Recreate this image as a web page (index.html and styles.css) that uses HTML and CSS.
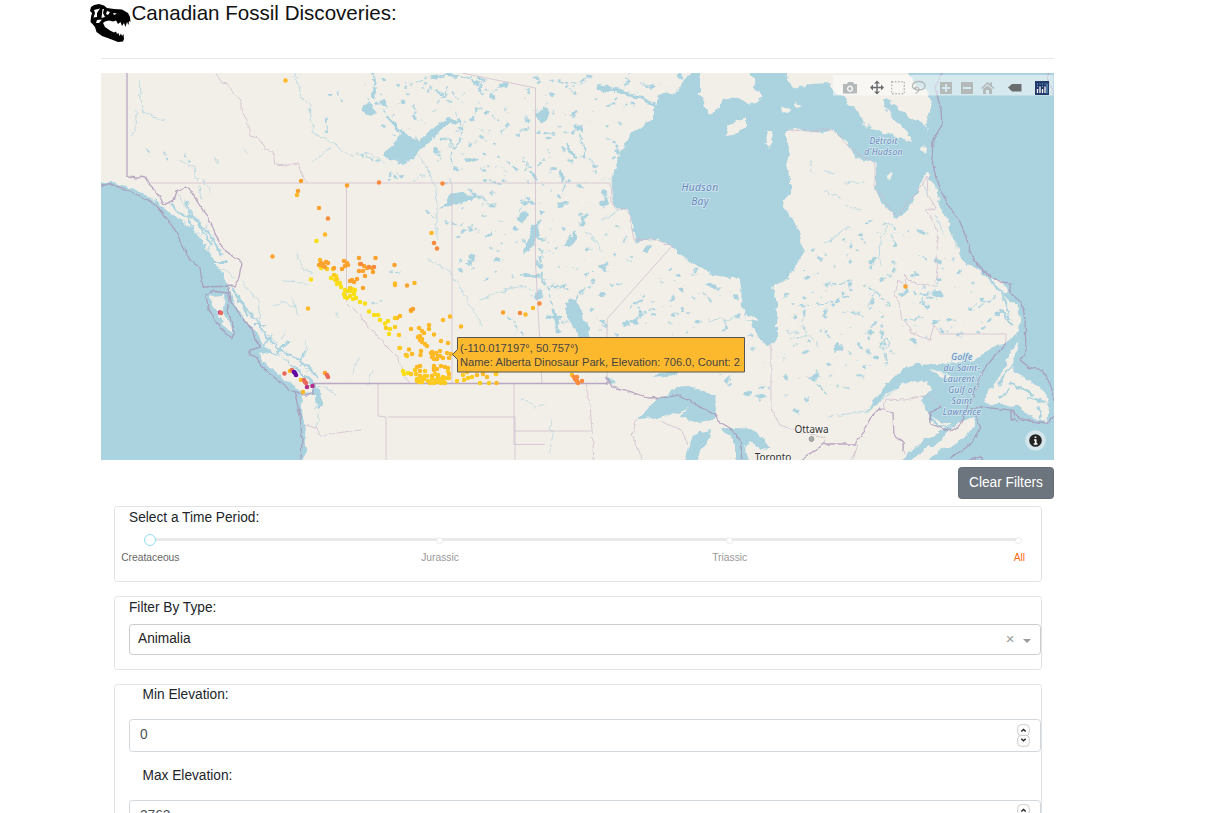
FILE: index.html
```html
<!DOCTYPE html>
<html lang="en">
<head>
<meta charset="utf-8">
<title>Canadian Fossil Discoveries</title>
<link rel="stylesheet" href="styles.css">
</head>
<body>
<main class="page">
<header class="header">
<svg class="logo" viewBox="86 0 50 46" aria-hidden="true">
<path d="M91 7L94 5L99 4L104 5.500L107 8L114 9L122 9.500L128 13L130 17L130.500 22L129 21L128.500 25L127 22L125.500 27L124 23L122 26L120.500 22L118 24L116 20.500L113 21.500L109 20.500L105 21.500L103 23L105 27L110 30.500L114 32.500L116 31.500L117 34L118.500 33L119.500 36L121 33.500L122 36L123.500 34L124 39L123 41.500L118 42L109 38.500L102 36L96.500 32L95 27L92.500 24L90.500 22L91 17L92 13L90 11Z"/>
<path class="logo-gap" d="M94 10L100 8.500L97 13L97 17L93.500 17.500L95 13ZM102.500 9L104 9L103 13L105 17L101.500 18ZM107 11L110 12L108 15L106 14ZM113 13L117 13.500L114 15ZM97 20L102 19.500L99 23L96 23Z"/>
</svg>
<h1 class="title">Canadian Fossil Discoveries:</h1>
</header>
<hr class="rule">
<section class="map">
<svg class="map-art" viewBox="101 73 953 387">
<defs>
<filter id="rough" color-interpolation-filters="sRGB" filterUnits="userSpaceOnUse" x="95" y="65" width="970" height="405"><feTurbulence type="fractalNoise" baseFrequency=".13" numOctaves="3" seed="4"/><feDisplacementMap in="SourceGraphic" scale="7" xChannelSelector="R" yChannelSelector="G"/></filter>
<filter id="wobble" color-interpolation-filters="sRGB" filterUnits="userSpaceOnUse" x="95" y="65" width="970" height="405"><feTurbulence type="fractalNoise" baseFrequency=".15" numOctaves="2" seed="9"/><feDisplacementMap in="SourceGraphic" scale="4" xChannelSelector="R" yChannelSelector="G"/></filter>
<filter id="speckle" color-interpolation-filters="sRGB" filterUnits="userSpaceOnUse" x="101" y="73" width="953" height="387"><feTurbulence type="fractalNoise" baseFrequency=".09 .11" numOctaves="4" seed="21"/><feColorMatrix values="0 0 0 0 .667  0 0 0 0 .827  0 0 0 0 .875  12 0 0 0 -7.9"/><feComposite in2="SourceGraphic" operator="in"/></filter>
</defs>
<rect class="land" x="101" y="73" width="953" height="387"/>
<path filter="url(#speckle)" d="M350 73H690L655 120L615 165L613 205L633 240L660 245L608 310L607 385L560 370L535 300L455 270L455 185L400 180ZM610 320L680 260L735 285L745 320L770 350V410L690 370L610 380ZM790 260L870 220L925 230L1000 300L1000 330L900 350L850 390L790 420L775 350L785 290Z"/>
<g filter="url(#rough)">
<path class="sea" d="M90 182L113 182L125 186L142 192L155 201L170 213L182 222L195 232L203 243L213 260L228 285L235 305L245 320L250 325L258 335L264 347L275 354L290 363L302 371L313 381L320 390L322 405L317 410L315 396L300 395L302 405L303 425L306 440L304 470H90Z"/>
<path class="sea" d="M690 60L690 73L683 80L680 88L674 94L664 92L658 97L654 108L654 119L645 123L635 130L628 138L624 147L620 154L615 170L611 184L612 200L616 209L628 209L632 223L635 238L634 244L642 240L655 239L672 246L682 257L700 267L712 275L725 277L740 279L742 285L741 300L744 316L752 323L757 335L766 346L772 345L777 338V325L778 310L775 295L771 287L785 280L795 270L802 255L801 240L798 227L790 215L782 208L784 200L791 195V182L786 165L790 155L786 145V133L794 128L808 131L822 134L832 129L843 138L850 145L855 157L867 160L876 163L875 175L877 195L886 207L897 218L910 206L918 190L927 173L935 185L940 205L948 222L954 240L963 260L980 271L1000 283L1009 290L1003 297L1018 305L1020 320L1019 332L1008 343L990 348L980 356L965 362L940 363L915 364L903 368L895 377L885 385L875 400L866 412L875 406L885 395L900 386L915 380L928 383L931 390L922 397L920 401L928 410L930 420L935 425L945 428L960 424L940 430L930 438L915 446L903 458L900 470H1070V60Z"/>
<path class="land" d="M259 353L266 352L280 357L292 366L305 378L313 388L313 394L302 392L294 385L282 378L270 368L262 361ZM210 296L225 295L223 309L230 324L234 334L228 330L218 316L212 305ZM700 60V95L708 113L715 112L722 100L740 97L750 105L763 98L755 87L748 60ZM738 120L746 118V125L738 133L727 135L726 127ZM767 131L773 133L770 148L764 145ZM782 107L791 110L790 114L783 112ZM794 101L802 106L797 108ZM788 60L785 80L795 88L812 84L830 83L833 92L845 98L855 108L862 120L872 129L887 133L900 138L912 142L908 132L895 120L885 107L882 98L890 100L897 108L908 116L921 122L930 130L926 120L932 108L929 93L915 85L905 60ZM891 171L893 174L888 179L887 175ZM920 146L928 147L927 153L919 150ZM862 122L870 125L867 128ZM745 314L757 318L758 321L747 319Z"/>
<path class="land" d="M1020 341L1010 350L1005 365L998 380L990 390L983 403L1003 405L1020 406L1025 413L1035 417L1047 422L1049 405L1047 395L1035 385L1020 375L1012 368L1015 355ZM930 369L942 372L955 378L950 380L938 376ZM907 465L920 453L935 444L948 432L965 418L974 418L974 426L968 435L955 445L940 450L925 465ZM932 416L943 423L953 423L947 427L937 424Z"/>
<path class="sea" d="M638 419L650 405L665 395L680 387L690 386L703 391L715 397L718 412L712 420L700 423L688 420L680 415L690 407L675 413L660 418ZM690 440L700 432L712 430L710 440L700 450L696 470H684ZM718 428L735 427L750 428L765 440L770 450L760 449L750 440L745 447L752 470H735L735 440L725 432ZM566 302L577 300L582 315L588 327L590 345L581 342L575 329L566 317ZM383 154L395 145L400 130L407 135L420 140L435 125L450 119L462 122L445 126L430 140L420 151L413 157L405 163L390 160ZM440 209L450 197L458 191L470 195L485 196L465 202L450 205ZM523 255L528 240L532 225L540 220L538 235L530 250ZM536 115L543 106L548 109L549 117L543 124L537 119ZM517 219L524 211L528 214L523 223ZM563 247L571 237L575 231L578 238L569 247ZM597 85L610 88L617 92L607 92L598 90ZM652 377L677 375L680 368L668 370ZM361 109L368 104L376 114L370 116ZM576 123L582 126L583 132L576 128ZM484 236L492 230V234L486 238Z"/>
</g>
<g class="water" filter="url(#rough)">
<path class="w3" d="M615 90L632 95L645 99L654 105M554 310L556 320L559 332M547 317L560 318M606 378L614 382M532 172L536 181M388 117L396 126L402 135M374 87L375 97M567 144L570 151L576 157M560 171L564 182"/>
<path class="w2" d="M550 80L575 84L590 76M455 112L464 133L455 145L449 158L453 167M410 84L430 77L450 75L478 79L483 95M430 86L453 104M438 103L448 88L459 99M472 118L477 108M466 77L488 91M537 132L556 134M577 128L580 139M583 144L586 158M539 164L545 158M507 162L518 171M525 171L528 164M483 181L500 184M569 180L562 193M445 222L477 228M427 211L433 217M460 260L474 269M490 248L500 250M522 201L520 212M540 249L542 275L548 291L552 305M550 285L570 290M577 299L586 286M610 285L622 283M644 313L657 309M630 308L641 300M682 308L690 312M702 294L712 300M760 387L768 389M792 305L827 304L850 294M833 285L852 281M870 288L880 294L890 309M881 324L887 369M914 292L936 300M920 302L933 290M979 306L998 296M976 303L970 310M905 320L925 318M804 304L803 325M835 352L842 345M820 388L828 394M846 388L852 391M868 337L870 342M147 150L151 156M186 154L190 162M165 151L167 160M327 120L326 132M361 155L382 162M394 177L398 180M388 182L392 171M370 106L368 98M372 72L376 88M338 92L341 100M330 94L333 96M390 272L400 273M373 304L382 301M507 317L515 322M516 327L522 336M585 275L592 270"/>
<path class="w1" d="M294 73L302 98L310 107L313 132L335 144L350 156L372 153L387 165M335 144L320 156L311 163M140 80L142 111L165 121M135 110L137 128L133 136M178 160L195 168L201 198M202 178L210 192M245 150L250 156M215 157L217 165M296 253L304 268L312 274M283 281L302 282L307 286M184 221L190 231L205 235M185 200L193 235L195 270M178 192L187 211M208 225L197 240L205 260M215 235L204 258L218 272M188 244L179 234M195 257L220 268L234 278M200 270L190 260M222 280L216 268M270 306L285 302L295 308M292 298L298 315M267 333L278 345M242 282L258 300L261 332M233 290L247 316M280 340L286 330M305 355L306 340M315 410L320 385L335 394M320 412L317 425M336 313L340 318M351 375L359 357M372 370L368 385M520 398L533 406L544 405M551 420L552 440L549 453M428 260L448 269L482 325M419 155L433 180L437 205V240M480 300L520 285L535 290M586 232L603 250M630 205L600 220M845 183L865 181M890 223L880 240L881 265M825 243L849 227M824 192L840 197M811 160L812 172M845 205L860 210M824 171L836 173M924 185L928 195M935 215L943 232M948 220L956 248M828 417L866 411L895 390M765 260L773 278M785 262L780 275M770 249L780 262M735 318L710 320M800 325L820 348M808 335L790 340"/>
<circle class="ring" cx="885" cy="344" r="4.500"/>
</g>
<g class="inlets" filter="url(#rough)"><path d="M170 203L180 215L196 218L210 235L222 255M187 200L190 225L205 250L218 278M175 218L190 246L215 270M183 234L200 242L204 264M200 262L222 280M201 275L224 275M190 210L212 246M205 243L198 262M195 272L210 262L228 262M210 285L214 272M230 285L240 302L256 319L268 338L281 351L300 360L319 378M236 293L248 316M254 325L267 325M264 347L272 334M277 354L288 341M300 365L304 352M939 195L955 235L970 260L1002 292L1010 320M946 213L964 238M963 250L990 270L1017 299M1000 310L1012 325M990 273L1004 284M998 385L1019 355M1010 383L1035 395M1028 397L1046 402M1000 398L1010 389M1038 406L1042 420"/></g>
<g class="border" filter="url(#wobble)">
<path d="M214 73L222 82L228 83L233 93L241 100V110L247 120L250 136L258 138L264 147L273 152L275 165L285 166L298 163L301 173L306 183M347 303L352 308L360 315L366 325L375 333L385 345L395 355L402 366L403 375L410 383M611 183L612 202L616 209L628 209L634 240L655 239L675 248M786 130L810 131L832 129L852 150L875 163V188L897 217L918 190L927 176L928 195L936 208L926 210L935 225L938 240L936 255L938 270L935 286L920 284L908 280L905 275L906 285L898 280L895 295L900 308L902 320L910 327L912 333L930 340L934 325L940 333M586 383L590 405L592 430L594 460M637 419L632 435L643 460M660 421L682 430L688 445M303 425L317 428L320 436L350 431L360 430M771 345V408L780 425L800 432L825 437L824 444M903 442L905 455M884 408L886 399L905 400L929 395L941 406M857 444L852 460"/>
</g>
<path class="border" d="M147 183H611M346.500 183V302M452 183V383M462 73L535.500 88V262L542 383M672 246L607 319V383M940 334H1006V343M378 384V416L386 417V460M388 417H515V460M515 444.500H545M514 384V431H592M514 431V445"/>
<g class="coast"><path d="M127 73V177"/></g>
<g class="coast" filter="url(#wobble)"><path d="M127 177L138 178L141 175L146 176L147 182L155 190L160 197L164 205L173 200L176 191L185 187L190 190L200 206L207 215L219 241L224 250L240 260L242 264L238 280L234 286L203 287L200 268L190 260L182 244L175 230L168 220L155 205L140 196L125 189L113 185H101M206 295L212 291L228 293L229 300L227 310L235 332L232 338L225 333L215 320L208 307ZM229 287L231 301L245 322L252 328L255 340L261 347L250 350L250 355L257 358L262 368L275 378L290 390L305 395L313 394V384M294 391L300 415L302 440L301 460"/>
<path d="M607 384V378L612 387L625 390L640 395L650 398L668 397L678 395L715 415L718 421L730 428L740 440L743 460M802 460L815 450L825 444H855L863 432L870 418L880 408L893 413L894 435L903 442V452M943 73L935 87L941 110L942 125L933 140L932 160L936 178L948 205L960 222L967 240L972 257L982 270L1000 282L1011 283L1010 293L1022 303L1025 320L1026 350L1020 360L1030 368L1043 370L1050 385L1054 400M1054 415L1047 423L1030 421L1018 418L1012 410L980 407L972 410L981 428L970 445L950 458M1006 343L983 370L971 403M941 406L930 413L931 424L950 431L960 425L968 405M1011 410V419L1018 421M970 460L980 457L983 460M1047 73L1053 95"/></g>
<path class="coast" d="M313 383.500H607"/>
<g class="dots">
<path class="gold" d="M285.500 80.500h0M297 195h0M325 234.500h0M308 308.500h0M320 260h0M395 283.500h0M431.500 233h0M450 316.500h0M461 326.500h0M443 320h0M414.500 283h0M411 311h0M397 318h0M400 316h0M411 329h0M429 325h0M429 329h0M419 328h0M422 331h0M434 334.500h0M441 341h0M448 343h0M533 308h0M525.500 314.500h0M395 285h0M399.500 348h0M409 349.500h0M412 354h0M406 355h0M420 336h0M422 339h0M425 344h0M424 333h0M427 346h0M420 340h0M418 337h0M420.500 355h0M421 351h0M431 353h0M433 355h0M436 353h0M438 356h0M434 359h0M440 351h0M440 356h0M447 353h0M449 358h0M432 352h0M443 358h0M451 354h0M434 366h0M437 369h0M441 366h0M445 367h0M448 368h0M420 366h0M420 371h0M417 367h0M420 376h0M434 370h0M449 374h0M477 375h0M483 374h0M487 377h0M496.500 383h0M496 374h0M432 376h0M438 376h0M290 371h0M303 392h0M301 380h0M572 375h0M437 359h0M432 357h0M422 342h0M434 368h0"/>
<path class="lemon" d="M316.500 241h0M311 279.500h0M321 268h0M331 278h0M335 280h0M338 283h0M336 276h0M341 287h0M345 290h0M351 291h0M354 294h0M350 296h0M345 297h0M353 299h0M356 298h0M340 283h0M344 294h0M360 302h0M365 303.500h0M369 311.500h0M374 315h0M378 315h0M380 320h0M388 321h0M385 323.500h0M390 329h0M389 334h0M403 371h0M408 373h0M404 374h0M348 291h0M347 298h0M355 290h0M352 289h0M337 284h0"/>
<path class="yellow" d="M327 269h0M333 269h0M334 275h0M337 279h0M395 327h0M386 328h0M399 335h0M400 348h0M407 356h0M415 370h0M411 374h0M416 374h0M417 379h0M420 379h0M424 379h0M428 381h0M430 383h0M434 383h0M438 382h0M441 383h0M445 383h0M446 378h0M443 377h0M440 379h0M436 380h0M432 379h0M427 376h0M422 382h0M417 381h0M425 376h0M425 371h0M448 371h0M435 374h0M457 381h0M463 375h0M468 378h0M472 377h0M480 383h0M489 383h0M496 374h0M467 372h0M464 380h0M443 380h0M438 375h0M449 378h0M421 377h0M419 382h0M395 318h0M350 288h0"/>
<path class="amber" d="M301 181h0M298 191h0M347 185.500h0M319 208h0M272.500 256.500h0M321 263h0M323 264h0M326 262h0M325 267h0M319 265h0M328 263h0M344 261h0M347 263h0M345 266h0M348 265h0M359 258h0M360 264h0M364 266h0M367 268h0M372 268h0M375.500 258h0M394.500 265h0M363 271h0M365 276h0M352 280h0M350 281h0M354 282h0M357 279h0M363 288h0M373 272h0M359 271h0M342 269h0M334 268h0M323 266h0M407 285.500h0M413 309h0M503 312.500h0M905.500 286.500h0M411 310h0M325 373h0"/>
<path class="orange" d="M379 182.500h0M442.500 183.500h0M328 218.500h0M434 243h0M437 248.500h0M361 264h0M369 267h0M374 267h0M520 313h0M539.500 303.500h0M574 377h0M575 379h0M577 377h0M577 381h0M578 383h0M582 381h0M576 380h0"/>
<path class="coral" d="M284.500 373.500h0M292 370h0M304 380h0M305 382h0M306 383h0M328 377h0M327 375h0"/>
<path class="plum" d="M220 312.500h0M307 387h0M312.500 386h0"/><path class="indigo" d="M294 372h0M295 373h0M296 375h0"/>
<path class="coral" d="M221 313h0"/>
</g>
<g class="sea-label"><text x="700" y="191">Hudson</text><text x="700" y="204.500">Bay</text></g>
<g class="sea-label small"><text x="883.500" y="143.500">Détroit</text><text x="883.500" y="154.500">d'Hudson</text><text x="962" y="359.500">Golfe</text><text x="962" y="370.500">du Saint-</text><text x="962" y="381.500">Laurent /</text><text x="962" y="392.500">Gulf of</text><text x="962" y="403.500">Saint</text><text x="962" y="414.500">Lawrence</text></g>
<g class="city"><text x="811.500" y="432.800">Ottawa</text><text x="773" y="460.800">Toronto</text><circle cx="811.500" cy="439" r="2.300"/></g>
<g class="hover"><path d="M452.500 354.500L457.500 349.500V337.500H744.500V372H457.500V359.500Z"/><text x="460" y="351.500">(-110.017197°, 50.757°)</text><text x="460" y="366" textLength="280">Name: Alberta Dinosaur Park, Elevation: 706.0, Count: 2</text></g>
<rect class="modebar" x="833" y="75" width="220.500" height="20.500"/>
<g class="tools">
<path fill-rule="evenodd" d="M844 84H847L848 82H853L854 84H857V93.500H843V84ZM850 85.500a3.200 3.200 0 1 0 .1 0ZM850 87a1.700 1.700 0 1 1-.1 0Z"/>
<path fill-rule="evenodd" d="M940 82H952V94H940ZM945 84V87H942V89H945V92H947V89H950V87H947V84ZM961 82H973V94H961ZM963 87V89H971V87Z"/>
<path d="M981 88L987.500 82L990 84V82.500H992V86L994.500 88L993.500 89L987.500 84L982 89ZM983 89L987.500 85.500L992 89V94H989V90H986V94H983Z"/>
<rect class="dashed" x="891.700" y="81.700" width="12.600" height="12"/><path class="lasso" d="M918 90C909 89 912 81.500 919 81.500C927 81.500 927 90 919 90C915 90 914 86.500 917 87C920.500 88 919 92 915.500 93.500"/>
</g>
<g class="tools active"><path d="M877 80.500L880 83.500H877.700V86.800H881V84.500L884 87.500L881 90.500V88.200H877.700V91.500H880L877 94.500L874 91.500H876.300V88.200H873V90.500L870 87.500L873 84.500V86.800H876.300V83.500H874ZM1008 87.500L1012 84H1021.500V91.500H1012Z"/></g>
<g class="plotly"><rect x="1035" y="81" width="14" height="14"/><path d="M1037.500 93V89M1040 93V86.500M1042.500 93V89M1045 93V86.500"/><path class="pips" d="M1037.500 84h.1M1037.500 86.500h.1M1040 84h.1M1042.500 84h.1M1042.500 86.500h.1M1045 84h.1M1047 84V93"/></g>
<g class="info"><circle class="halo" cx="1035.500" cy="440.500" r="10.300"/><circle cx="1035.500" cy="440.500" r="6.300"/><path d="M1035.500 436.500v1.500M1034 440h1.700v4M1033.700 444h3.800"/></g>
</svg>
</section>
<div class="actions"><button class="clear">Clear Filters</button></div>
<section class="card period">
<label class="label">Select a Time Period:</label>
<div class="slider"><i class="handle"></i><i class="stop"></i><i class="stop"></i><i class="stop"></i></div>
<div class="marks"><span class="mark current">Creataceous</span><span class="mark">Jurassic</span><span class="mark">Triassic</span><span class="mark all">All</span></div>
</section>
<section class="card type">
<label class="label">Filter By Type:</label>
<div class="select"><span class="value">Animalia</span><span class="clear-x">×</span><i class="caret"></i></div>
</section>
<section class="card elevation">
<label class="label inset">Min Elevation:</label>
<div class="number"><span>0</span><svg class="spin" viewBox="0 0 13 23"><rect x=".7" y=".7" width="11.600" height="10.800" rx="3.500"/><rect x=".7" y="11.500" width="11.600" height="10.800" rx="3.500"/><path d="M4.300 7.500L6.500 5.500L8.700 7.500M4.300 14.700L6.500 16.700L8.700 14.700"/></svg></div>
<label class="label inset">Max Elevation:</label>
<div class="number"><span>3763</span><svg class="spin" viewBox="0 0 13 23"><rect x=".7" y=".7" width="11.600" height="10.800" rx="3.500"/><rect x=".7" y="11.500" width="11.600" height="10.800" rx="3.500"/><path d="M4.300 7.500L6.500 5.500L8.700 7.500M4.300 14.700L6.500 16.700L8.700 14.700"/></svg></div>
</section>
</main>
</body>
</html>
```
FILE: styles.css
```css
* { box-sizing: border-box; }
html, body { height: 100%; overflow: hidden; }
body { margin: 0; background: #fff; color: #212529; font: 13.71px/20.5px "Liberation Sans", Arial, sans-serif; }
.page { width: 953px; height: 813px; margin-left: 101px; overflow: hidden; padding-left: 15px; margin-left: 86px; width: 968px; }
.header { display: flex; height: 58px; margin-left: -15px; }
.logo { width: 50px; height: 46px; flex: none; }
.logo-gap { fill: #fff; }
.title { margin: 0 0 0 -4.5px; font-size: 20.57px; line-height: 26px; font-weight: 400; color: #111; }
.rule { height: 1px; border: 0; margin: 0 0 14px; background: #e7e7e7; }
.map { height: 387px; }
.map-art { display: block; width: 953px; height: 387px; }
.land { fill: #f2efe9; }
.sea { fill: #aad3df; }
.water { fill: none; stroke: #aad3df; stroke-linecap: round; }
.w1 { stroke-width: .7; }
.w2 { stroke-width: 1.7; stroke-dasharray: 3 4 6 3 2 5; }
.w3 { stroke-width: 3; }
.ring { stroke-width: 1.2; }
.inlets { fill: none; stroke: #aad3df; stroke-width: 2; }
.border { fill: none; stroke: #cdb9cc; stroke-width: .9; opacity: .8; }
.coast { fill: none; stroke: #a78fb4; stroke-width: 1.3; opacity: .75; }
.dots { fill: none; stroke-width: 4.6; stroke-linecap: round; }
.gold { stroke: #fdb926; } .lemon { stroke: #f8df15; } .yellow { stroke: #fdcb20; }
.amber { stroke: #fca22d; } .orange { stroke: #f98a3c; } .coral { stroke: #e9695b; }
.plum { stroke: #b5308a; } .indigo { stroke: #6205a5; }
.sea-label { font: italic 10.3px "Noto Sans", sans-serif; fill: #6587bd; text-anchor: middle; paint-order: stroke; stroke: #d4e7ee; stroke-width: 1.5px; letter-spacing: .3px; }
.small { font-size: 8.6px; }
.city { font: 10px "Noto Sans", sans-serif; fill: #333; text-anchor: middle; paint-order: stroke; stroke: #f8f6f2; stroke-width: 1.5px; }
.city circle { fill: #aaa; stroke: #555; stroke-width: .8; }
.hover path { fill: #fdb92e; stroke: #555; }
.hover text { font-size: 11.14px; fill: #444; }
.modebar { fill: #fff; opacity: .5; }
.tools { fill: #b4b9ba; }
.tools.active { fill: #6a6e70; }
.dashed { fill: none; stroke: #b4b9ba; stroke-width: 1.4; stroke-dasharray: 1.6 1.6; }
.lasso { fill: none; stroke: #b4b9ba; stroke-width: 1.3; }
.plotly rect { fill: #24396b; }
.plotly path { fill: none; stroke: #fff; stroke-width: 1.3; }
.plotly .pips { stroke: #79b7d2; stroke-width: 1; stroke-linecap: round; }
.info { fill: #222; }
.info .halo { fill: #d4e6ec; }
.info path { fill: none; stroke: #fff; stroke-width: 1.7; }
.actions { display: flex; justify-content: flex-end; padding-top: 6.5px; height: 45.5px; }
.clear { width: 96px; height: 32.5px; border: 1px solid #626c75; border-radius: 3.4px; background: #6c757d; color: #fff; font: inherit; padding: 1px 0 0; }
.card { width: 927.5px; margin: 0 0 14px 13px; border: 1px solid #e2e3e4; border-radius: 3.4px; padding-left: 14px; }
.label { display: block; }
.period { height: 76px; padding-top: 1px; }
.slider { display: flex; align-items: center; justify-content: space-between; width: 878.5px; height: 12px; margin: 6px 0 0 15px; background: linear-gradient(#e9e9e9, #e9e9e9) 0 50% / 874px 3.4px no-repeat; }
.handle { width: 12px; height: 12px; margin-right: -2.5px; border: 1.7px solid #96dbfa; border-radius: 50%; background: #fff; }
.stop { width: 7px; height: 7px; border: 1.7px solid #e9e9e9; border-radius: 50%; background: #fff; }
.marks { display: grid; grid-template-columns: repeat(4, 289.7px); width: 1159px; margin: 3.5px 0 0 -123.5px; font-size: 10.29px; line-height: 15px; }
.mark { text-align: center; color: #999; }
.current { color: #666; }
.all { color: #ff6c1a; }
.type { height: 74px; padding-top: 1px; }
.select { display: flex; align-items: center; height: 31px; margin-top: 6px; border: 1px solid #ccc; border-radius: 3.4px; padding: 0 9px 0 8px; color: #222; }
.value { flex: 1; }
.clear-x { color: #999; font-size: 15px; margin-right: 8px; }
.caret { border: 4.3px solid transparent; border-top-color: #999; border-bottom: 0; margin-top: 2px; }
.elevation { height: 160px; padding-top: .5px; }
.inset { padding-left: 13.5px; }
.number { display: flex; align-items: center; justify-content: space-between; height: 32.5px; margin: 13.5px 0 14px; border: 1px solid #d3d8dd; border-radius: 3.4px; padding: 0 10px; color: #495057; }
.spin { width: 13px; height: 23px; fill: #fff; stroke: #ccc; }
.spin path { fill: none; stroke: #222; stroke-width: 1.4; }
```
